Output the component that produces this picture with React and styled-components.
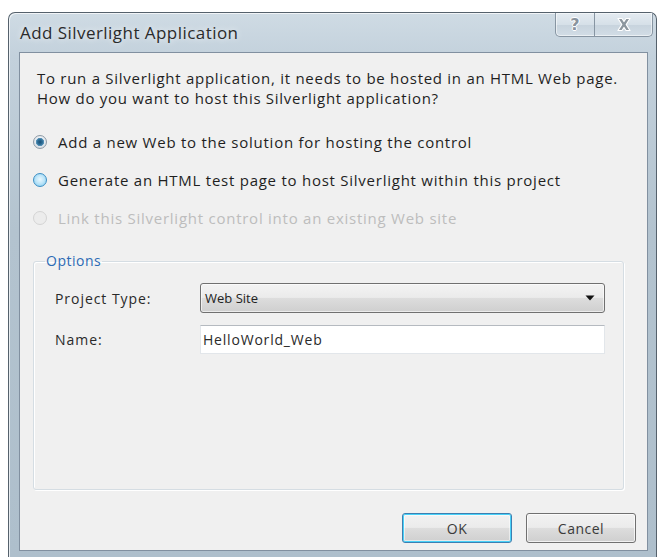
import React from "react";
import styled, { createGlobalStyle } from "styled-components";

const GlobalStyle = createGlobalStyle`
  html, body {
    margin: 0;
    padding: 0;
    background: #ffffff;
  }
  body {
    font-family: "Open Sans", "Noto Sans", "Liberation Sans", sans-serif;
    color: #1f1f1f;
  }
  * { box-sizing: border-box; }
`;

const Page = styled.div`
  padding: 12px 2px 1px 8px;
`;

const Window = styled.div`
  width: 649px;
  height: 545px;
  display: flex;
  flex-direction: column;
  border: 1px solid #55616c;
  border-bottom: none;
  border-radius: 7px 7px 0 0;
  background: linear-gradient(180deg, #cfdbe4 0%, #c3d1dc 8%, #b3c3cf 40%, #aebfcc 100%);
  box-shadow: inset 1px 1px 0 rgba(255, 255, 255, 0.7);
`;

const TitleBar = styled.div`
  height: 39px;
  flex: none;
  display: flex;
  align-items: flex-start;
  justify-content: space-between;
  padding: 0 3px 0 11px;
`;

const Title = styled.div`
  align-self: center;
  font-size: 17px;
  color: #2b2b2b;
  text-shadow: 0 0 6px rgba(255, 255, 255, 0.9);
  letter-spacing: 0.45px;
  margin-top: -1px;
`;

const CaptionGroup = styled.div`
  display: flex;
  height: 24px;
  border: 1px solid #8795a2;
  border-top: none;
  border-radius: 0 0 5px 5px;
  overflow: hidden;
  background: linear-gradient(180deg, #e4ebf1 0%, #d6e0e8 50%, #c7d3dd 51%, #d2dde6 100%);
  box-shadow: inset 0 0 0 1px rgba(255, 255, 255, 0.55);
`;

const CaptionButton = styled.div`
  width: ${(p) => p.$w}px;
  display: flex;
  align-items: center;
  justify-content: center;
  & + & {
    border-left: 1px solid #8795a2;
  }
`;

const HelpGlyph = styled.span`
  font-family: "DejaVu Sans", sans-serif;
  font-weight: bold;
  font-size: 16px;
  color: #8a949e;
  text-shadow: 1px 0 0 #fff, -1px 0 0 #fff, 0 1px 0 #fff, 0 -1px 0 #fff;
  line-height: 1;
`;

const Body = styled.div`
  flex: 1;
  margin: 0 8px 6px 10px;
  border: 1px solid #8190a0;
  background: #f0f0f0;
  display: flex;
  flex-direction: column;
  padding: 15px 11px 7px 13px;
`;

const Intro = styled.p`
  margin: 0 0 0 4px;
  font-size: 15px;
  letter-spacing: 0.72px;
  line-height: 20px;
  white-space: nowrap;
  color: #1f1f1f;
`;

const RadioList = styled.div`
  margin-top: 15px;
  display: flex;
  flex-direction: column;
`;

const RadioRow = styled.label`
  height: 38px;
  display: flex;
  align-items: center;
  gap: 11px;
  font-size: 15px;
  letter-spacing: 0.75px;
  white-space: nowrap;
  color: ${(p) => (p.$disabled ? "#bdbdbd" : "#1f1f1f")};
`;

const Radio = styled.input.attrs({ type: "radio" })`
  appearance: none;
  -webkit-appearance: none;
  margin: 0;
  width: 14px;
  height: 14px;
  border-radius: 50%;
  flex: none;
  border: 1px solid #8e9aa5;
  background: radial-gradient(circle at 50% 40%, #ffffff 0%, #e6e9ec 60%, #c9ced3 100%);

  &:checked {
    background:
      radial-gradient(circle at 50% 50%, #1a4f76 0%, #2f6f98 30%, #5a94b8 45%, rgba(255,255,255,0) 52%),
      radial-gradient(circle at 50% 40%, #ffffff 0%, #e0e6ec 60%, #c3cbd3 100%);
  }

  &[data-hot="true"] {
    border-color: #3d8fc4;
    background: radial-gradient(circle at 50% 45%, #e9f7fe 0%, #bfe6f9 45%, #7cc8ee 100%);
  }

  &:disabled {
    border-color: #d4d4d4;
    background: #ececec;
  }
`;

const Group = styled.fieldset`
  flex: 1;
  margin: 15px 12px 0 0;
  padding: 13px 18px 0 21px;
  border: 1px solid #d5dde3;
  border-radius: 3px;
  box-shadow: inset 1px 1px 0 #ffffff, 1px 1px 0 #ffffff;
  min-width: 0;
`;

const Legend = styled.legend`
  padding: 0 1px;
  margin-left: -10px;
  font-size: 14px;
  letter-spacing: 0.5px;
  color: #2d6bb5;
  line-height: 18px;
`;

const FieldGrid = styled.div`
  display: grid;
  grid-template-columns: 145px 1fr;
  row-gap: 12px;
  align-items: center;
`;

const FieldLabel = styled.label`
  font-size: 14px;
  letter-spacing: 0.95px;
  color: #2a2a2a;
  padding-left: 0;
`;

const Combo = styled.div`
  height: 30px;
  border: 1px solid #707070;
  border-radius: 3px;
  background: linear-gradient(180deg, #f3f3f3 0%, #ebebeb 48%, #dddddd 50%, #cfcfcf 100%);
  box-shadow: inset 0 0 0 1px rgba(255, 255, 255, 0.6);
  display: flex;
  align-items: center;
  justify-content: space-between;
  padding: 0 9px 0 4px;
  font-size: 13px;
  color: #222;
`;

const TextBox = styled.input`
  height: 29px;
  width: 100%;
  border: 1px solid #e2e6ea;
  border-top-color: #b5bac0;
  background: #ffffff;
  padding: 0 2px;
  font-family: inherit;
  font-size: 14px;
  letter-spacing: 0.8px;
  color: #2a2a2a;
  outline: none;
`;

const Footer = styled.div`
  margin-top: 23px;
  display: flex;
  justify-content: flex-end;
  gap: 14px;
`;

const Button = styled.button`
  width: 110px;
  height: 30px;
  border-radius: 3px;
  font-family: inherit;
  font-size: 14px;
  letter-spacing: 0.5px;
  color: #3a3a3a;
  border: 1px solid ${(p) => (p.$default ? "#3c7fb1" : "#707070")};
  background: linear-gradient(180deg, #f2f2f2 0%, #ebebeb 48%, #dddddd 50%, #cfcfcf 100%);
  box-shadow: ${(p) =>
    p.$default
      ? "inset 0 0 0 1px #48d1f8, inset 0 0 0 2px rgba(255,255,255,0.5)"
      : "inset 0 0 0 1px rgba(255,255,255,0.7)"};
  padding: 0;
`;

const ArrowDown = () => (
  <svg width="10" height="6" viewBox="0 0 10 6">
    <path d="M0.5 0.5h9L5 5.5z" fill="#111" />
  </svg>
);

const CloseGlyph = () => (
  <svg width="18" height="15" viewBox="0 0 18 15">
    <path
      d="M3 1.5h4l2 3 2-3h4l-3.8 6 3.8 6h-4l-2-3-2 3H3l3.8-6z"
      fill="#8d979f"
      stroke="#ffffff"
      strokeWidth="1.2"
      strokeLinejoin="round"
    />
  </svg>
);

export default function App() {
  return (
    <>
      <GlobalStyle />
      <Page>
        <Window>
          <TitleBar>
            <Title>Add Silverlight Application</Title>
            <CaptionGroup>
              <CaptionButton $w={38}>
                <HelpGlyph>?</HelpGlyph>
              </CaptionButton>
              <CaptionButton $w={58}>
                <CloseGlyph />
              </CaptionButton>
            </CaptionGroup>
          </TitleBar>
          <Body>
            <Intro>
              To run a Silverlight application, it needs to be hosted in an HTML Web page.
              <br />
              How do you want to host this Silverlight application?
            </Intro>
            <RadioList>
              <RadioRow>
                <Radio name="host" defaultChecked />
                Add a new Web to the solution for hosting the control
              </RadioRow>
              <RadioRow>
                <Radio name="host" data-hot="true" />
                Generate an HTML test page to host Silverlight within this project
              </RadioRow>
              <RadioRow $disabled>
                <Radio name="host" disabled />
                Link this Silverlight control into an existing Web site
              </RadioRow>
            </RadioList>
            <Group>
              <Legend>Options</Legend>
              <FieldGrid>
                <FieldLabel>Project Type:</FieldLabel>
                <Combo role="combobox">
                  <span>Web Site</span>
                  <ArrowDown />
                </Combo>
                <FieldLabel>Name:</FieldLabel>
                <TextBox defaultValue="HelloWorld_Web" />
              </FieldGrid>
            </Group>
            <Footer>
              <Button $default>OK</Button>
              <Button>Cancel</Button>
            </Footer>
          </Body>
        </Window>
      </Page>
    </>
  );
}
